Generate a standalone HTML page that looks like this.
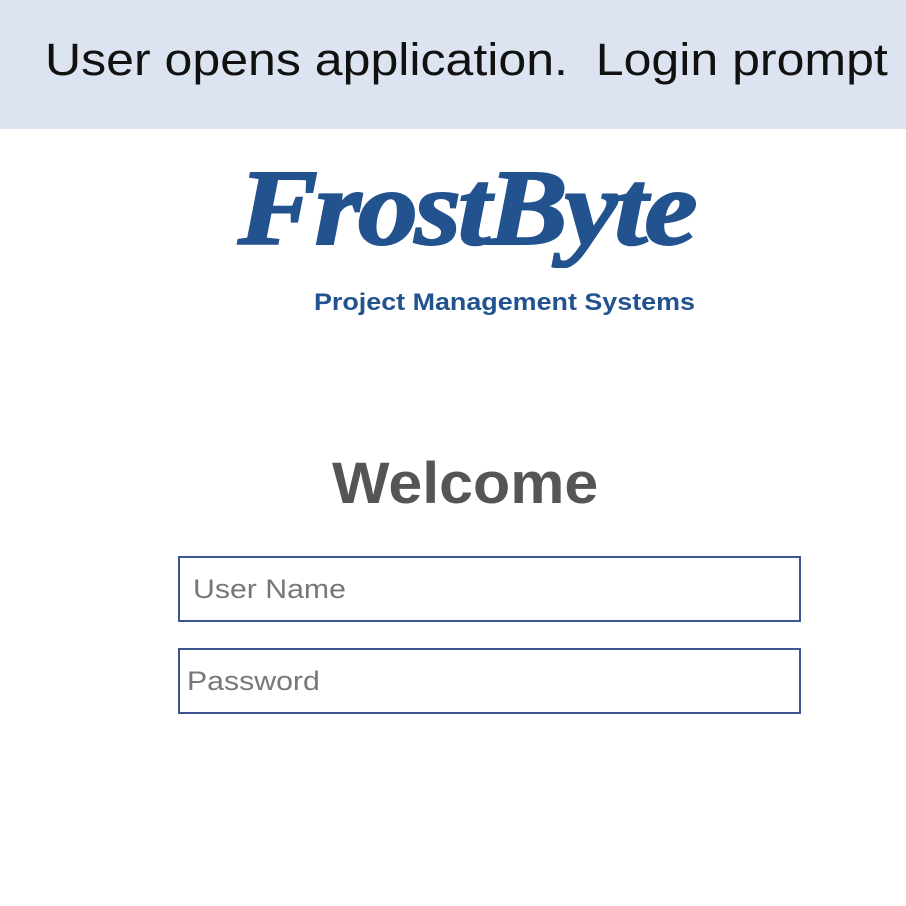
<!DOCTYPE html>
<html><head><meta charset="utf-8"><style>
body{margin:0;width:906px;height:906px;background:#fff;position:relative;overflow:hidden;font-family:"Liberation Sans",sans-serif}
.hdr{position:absolute;left:0;top:0;width:906px;height:129px;background:#dce3f1}
.hdr span{position:absolute;left:45px;top:34px;font-size:45px;color:#111;white-space:nowrap;transform:scaleX(1.112);transform-origin:0 0}
.logo{position:absolute;left:238px;top:147px;font-family:"Liberation Serif",serif;font-style:italic;font-weight:bold;font-size:108px;color:#22538f;letter-spacing:-3px;white-space:nowrap;transform:scaleX(1.11);transform-origin:0 0;-webkit-text-stroke:2px #22538f}
.sub{position:absolute;left:314px;top:289px;font-size:24px;font-weight:bold;color:#22538f;white-space:nowrap;transform:scaleX(1.12);transform-origin:0 0}
.wel{position:absolute;left:332px;top:450px;font-size:58px;font-weight:bold;color:#555;white-space:nowrap;transform:scaleX(1.05);transform-origin:0 0}
.box{position:absolute;left:178px;width:623px;height:66px;border:2px solid #3e5592;box-sizing:border-box}
.box span{position:absolute;top:16px;font-size:27px;color:#777;transform:scaleX(1.12);transform-origin:0 0;white-space:nowrap}
</style></head><body>
<div class="hdr"><span>User opens application.&nbsp; Login prompt</span></div>
<div class="logo">FrostByte</div>
<div class="sub">Project Management Systems</div>
<div class="wel">Welcome</div>
<div class="box" style="top:556px"><span style="left:13px">User Name</span></div>
<div class="box" style="top:648px"><span style="left:7px">Password</span></div>
</body></html>
